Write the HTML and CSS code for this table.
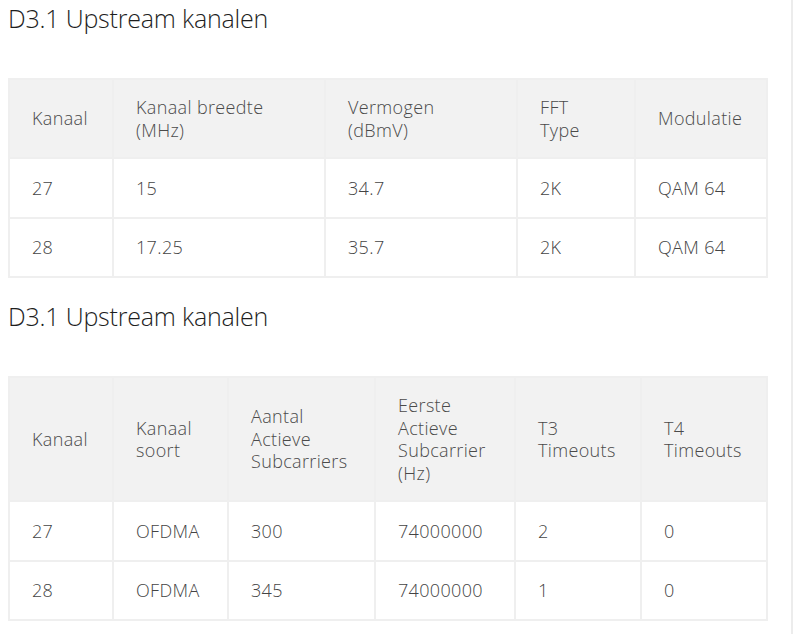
FILE: index.html
```html
<!DOCTYPE html>
<html lang="nl">
<head>
<meta charset="utf-8">
<title>D3.1 Upstream kanalen</title>
<link rel="stylesheet" href="styles.css">
</head>
<body>
<div class="page">
  <section class="block">
    <h2 class="title">D3.1 Upstream kanalen</h2>
    <table class="grid">
      <colgroup>
        <col class="w102"><col class="w210"><col class="w190"><col class="w116"><col class="w130">
      </colgroup>
      <thead>
        <tr><th>Kanaal</th><th>Kanaal breedte<br>(MHz)</th><th>Vermogen<br>(dBmV)</th><th>FFT<br>Type</th><th>Modulatie</th></tr>
      </thead>
      <tbody>
        <tr><td>27</td><td>15</td><td>34.7</td><td>2K</td><td>QAM 64</td></tr>
        <tr><td>28</td><td>17.25</td><td>35.7</td><td>2K</td><td>QAM 64</td></tr>
      </tbody>
    </table>
  </section>
  <section class="block second">
    <h2 class="title">D3.1 Upstream kanalen</h2>
    <table class="grid">
      <colgroup>
        <col class="w102"><col class="w113"><col class="w145"><col class="w138"><col class="w124"><col class="w124">
      </colgroup>
      <thead>
        <tr><th>Kanaal</th><th>Kanaal<br>soort</th><th>Aantal<br>Actieve<br>Subcarriers</th><th>Eerste<br>Actieve<br>Subcarrier<br>(Hz)</th><th>T3<br>Timeouts</th><th>T4<br>Timeouts</th></tr>
      </thead>
      <tbody>
        <tr><td>27</td><td>OFDMA</td><td>300</td><td>74000000</td><td>2</td><td>0</td></tr>
        <tr><td>28</td><td>OFDMA</td><td>345</td><td>74000000</td><td>1</td><td>0</td></tr>
      </tbody>
    </table>
  </section>
</div>
</body>
</html>
```
FILE: styles.css
```css
html, body {
  margin: 0;
  padding: 0;
  background: #ffffff;
}
body {
  font-family: "Open Sans", "Noto Sans", sans-serif;
  color: #555555;
}
.page {
  width: 783px;
  min-height: 634px;
  padding-left: 8px;
  border-right: 2px solid #ececec;
}
.block.second {
  margin-top: 20px;
}
.title {
  margin: 0 0 42px 0;
  font-size: 25px;
  line-height: 36px;
  font-weight: 300;
  color: #1e1e1e;
  letter-spacing: -0.2px;
}
.grid {
  width: 760px;
  table-layout: fixed;
  border-collapse: separate;
  border-spacing: 2px;
  background: #efefef;
  font-size: 18px;
  line-height: 22.5px;
  font-weight: 300;
  letter-spacing: 0.35px;
}
.grid th {
  background: #f2f2f2;
  font-weight: 300;
  text-align: left;
  vertical-align: middle;
  padding: 16px 22px;
  color: #4a4a4a;
}
.grid td {
  background: #ffffff;
  vertical-align: middle;
  padding: 17.5px 22px;
  color: #444444;
}
.w102 { width: 102px; }
.w210 { width: 210px; }
.w190 { width: 190px; }
.w116 { width: 116px; }
.w130 { width: 130px; }
.w113 { width: 113px; }
.w145 { width: 145px; }
.w138 { width: 138px; }
.w124 { width: 124px; }
```
